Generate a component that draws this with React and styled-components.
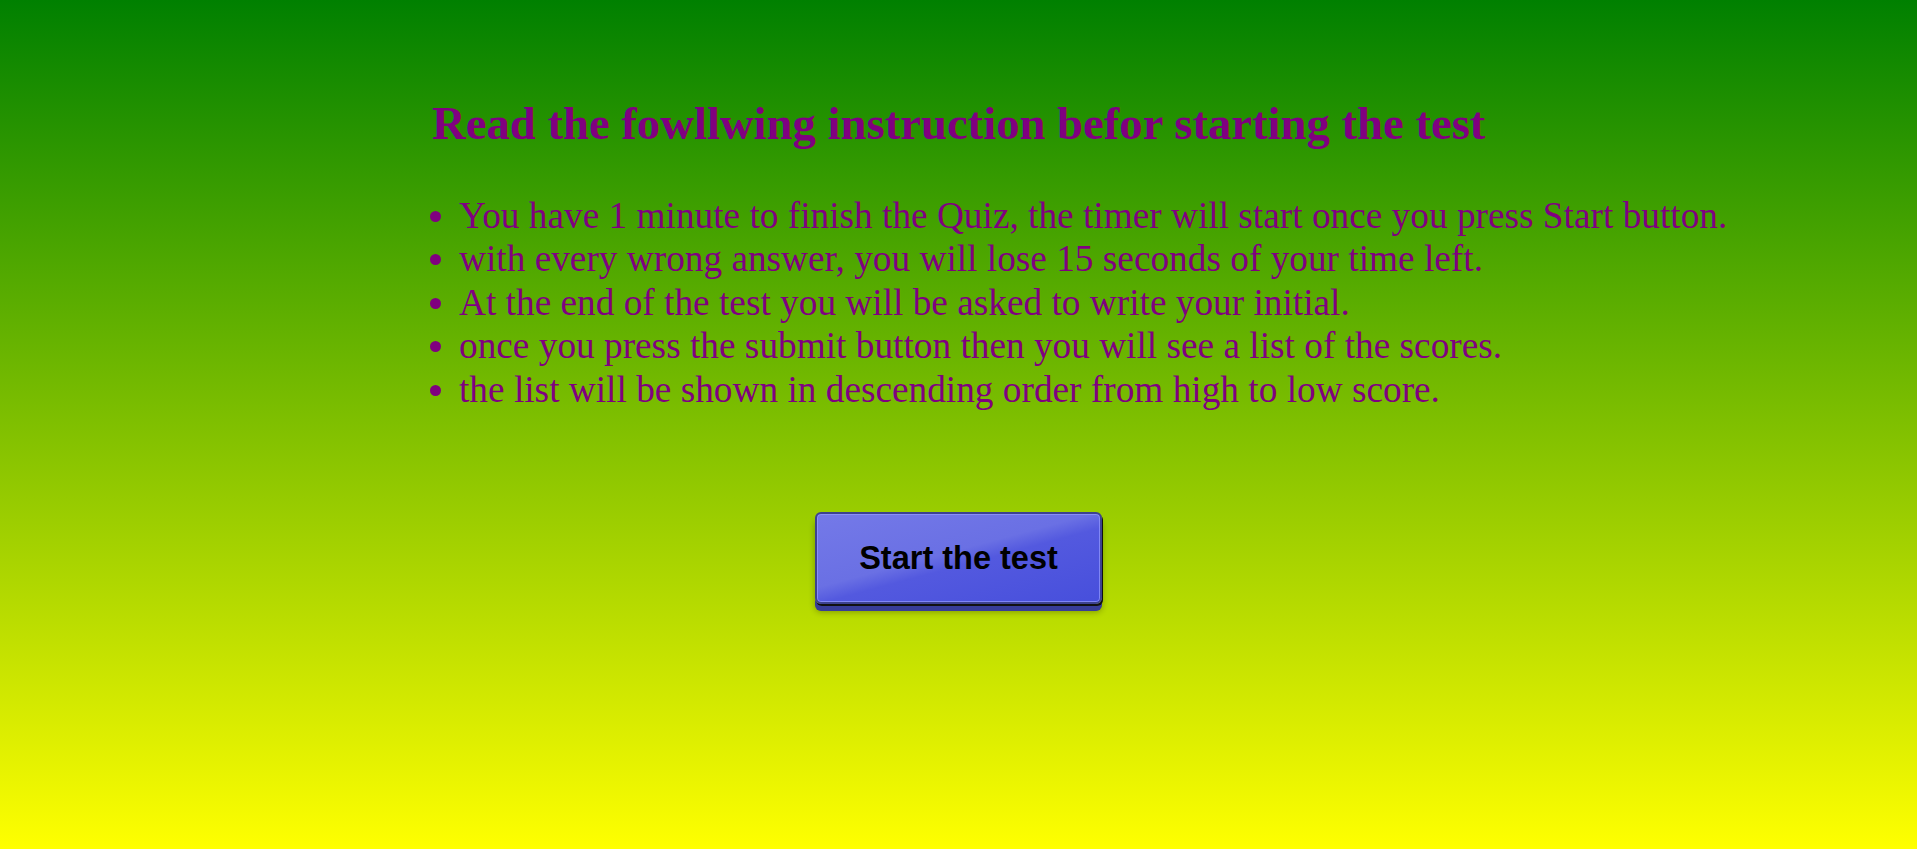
import React from "react";
import styled, { createGlobalStyle } from "styled-components";

const GlobalStyle = createGlobalStyle`
  html, body { margin: 0; padding: 0; }
  body {
    min-height: 100vh;
    background: linear-gradient(to bottom, #008000, #ffff00);
    background-attachment: fixed;
    font-family: "Liberation Serif", "Times New Roman", serif;
  }
`;

const Page = styled.main`
  min-height: 100vh;
  display: flex;
  flex-direction: column;
  align-items: stretch;
  padding-top: 96px;
  box-sizing: border-box;
`;

const Instructions = styled.section`
  padding-left: 432px;
  color: #800080;
`;

const Heading = styled.h1`
  margin: 0 0 44px 0;
  font-family: "Liberation Serif", "Times New Roman", serif;
  font-weight: bold;
  font-size: 46.7px;
  color: #800080;
`;

const List = styled.ul`
  margin: 0;
  padding-left: 27px;
  font-size: 37.3px;
  color: #800080;
`;

const Item = styled.li`
  line-height: 43.4px;
`;

const ButtonRow = styled.div`
  display: flex;
  justify-content: center;
  margin-top: 101px;
`;

const StartButton = styled.button`
  font-family: "Liberation Sans", Arial, sans-serif;
  font-weight: bold;
  font-size: 32.5px;
  line-height: 36px;
  color: #000;
  width: 287px;
  height: 92px;
  padding: 0;
  border: 2px solid #3d428f;
  border-radius: 6px;
  background: linear-gradient(
    165deg,
    #7479e8 0%,
    #6a70e4 45%,
    #5359df 55%,
    #474fdc 100%
  );
  box-shadow:
    inset 0 0 0 1px rgba(150, 155, 255, 0.7),
    1px 2px 0 #111,
    0 7px 0 #383d98,
    0 8px 6px rgba(0, 0, 0, 0.3);
  cursor: pointer;
`;

const items = [
  "You have 1 minute to finish the Quiz, the timer will start once you press Start button.",
  "with every wrong answer, you will lose 15 seconds of your time left.",
  "At the end of the test you will be asked to write your initial.",
  "once you press the submit button then you will see a list of the scores.",
  "the list will be shown in descending order from high to low score.",
];

export default function App() {
  return (
    <>
      <GlobalStyle />
      <Page>
        <Instructions>
          <Heading>Read the fowllwing instruction befor starting the test</Heading>
          <List>
            {items.map((t) => (
              <Item key={t}>{t}</Item>
            ))}
          </List>
        </Instructions>
        <ButtonRow>
          <StartButton type="button">Start the test</StartButton>
        </ButtonRow>
      </Page>
    </>
  );
}
